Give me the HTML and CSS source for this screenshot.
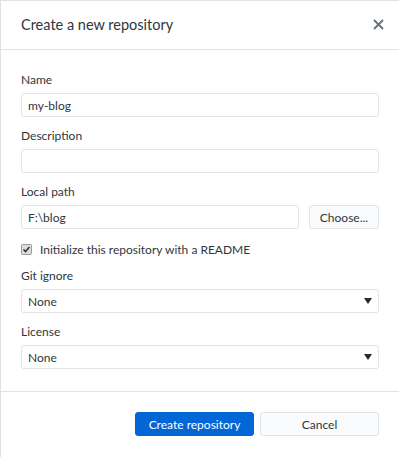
FILE: index.html
```html
<!DOCTYPE html>
<html lang="en">
<head>
  <meta charset="UTF-8">
  <title>Create a new repository</title>
  <link rel="stylesheet" href="styles.css">
</head>
<body>
  <div class="dialog">
    <div class="dialog-header">
      <div class="title">Create a new repository</div>
      <svg class="close" width="11" height="11" viewBox="0 0 11 11">
        <path d="M1 1L10 10M10 1L1 10" stroke="#6a737d" stroke-width="2" fill="none"/>
      </svg>
    </div>

    <div class="dialog-body">
      <div class="field">
        <label>Name</label>
        <div class="input">my-blog</div>
      </div>

      <div class="field">
        <label>Description</label>
        <div class="input"></div>
      </div>

      <div class="field">
        <label>Local path</label>
        <div class="path-row">
          <div class="input">F:\blog</div>
          <div class="button choose">Choose...</div>
        </div>
      </div>

      <div class="checkbox-row">
        <svg class="checkbox" width="11" height="11" viewBox="0 0 11 11">
          <rect x="0.5" y="0.5" width="10" height="10" rx="1" fill="#dcdcdc" stroke="#9a9a9a"/>
          <path d="M2.5 5.5L4.5 7.5L8.5 3" stroke="#333" stroke-width="1.6" fill="none"/>
        </svg>
        <span>Initialize this repository with a README</span>
      </div>

      <div class="field">
        <label>Git ignore</label>
        <div class="input select">
          <span>None</span>
          <svg width="8" height="6" viewBox="0 0 8 6"><path d="M0 0H8L4 6Z" fill="#24292e"/></svg>
        </div>
      </div>

      <div class="field">
        <label>License</label>
        <div class="input select">
          <span>None</span>
          <svg width="8" height="6" viewBox="0 0 8 6"><path d="M0 0H8L4 6Z" fill="#24292e"/></svg>
        </div>
      </div>
    </div>

    <div class="dialog-footer">
      <div class="button primary">Create repository</div>
      <div class="button">Cancel</div>
    </div>
  </div>
</body>
</html>
```

FILE: styles.css
```css
*, *::before, *::after {
  box-sizing: border-box;
}

body {
  margin: 0;
  font-family: 'Lato', sans-serif;
  font-size: 12px;
  color: #2f363d;
  background: #fff;
}

.dialog {
  height: 457px;
  border-left: 1px solid #dfe2e5;
  border-top: 1px solid #e1e4e8;
}

.dialog-header {
  height: 49px;
  display: flex;
  align-items: center;
  justify-content: space-between;
  padding: 0 15px 2px 20px;
  border-bottom: 1px solid #e1e4e8;
}

.title {
  font-size: 14.5px;
}

.dialog-body {
  padding: 22px 20px 22px;
  border-bottom: 1px solid #e1e4e8;
}

.field {
  display: flex;
  flex-direction: column;
  margin-bottom: 11px;
}

.field:last-child {
  margin-bottom: 0;
}

.field label {
  line-height: 16px;
  margin-bottom: 5px;
}

.input {
  height: 24px;
  border: 1px solid #e1e4e8;
  border-radius: 3px;
  padding: 0 6px;
  display: flex;
  align-items: center;
}

.path-row {
  display: flex;
  gap: 10px;
}

.path-row .input {
  flex: 1;
}

.button {
  height: 24px;
  display: flex;
  align-items: center;
  justify-content: center;
  border: 1px solid #e1e4e8;
  border-radius: 3px;
  background: #fafbfc;
  width: 119px;
}

.button.choose {
  width: 70px;
}

.checkbox-row {
  display: flex;
  align-items: center;
  gap: 8px;
  height: 18px;
  margin-bottom: 10px;
}

.select {
  justify-content: space-between;
  padding-right: 6px;
}

.dialog-footer {
  display: flex;
  justify-content: flex-end;
  gap: 6px;
  padding: 20px 20px 0;
}

.button.primary {
  background: #0366d6;
  border-color: #0366d6;
  color: #fff;
}
```
